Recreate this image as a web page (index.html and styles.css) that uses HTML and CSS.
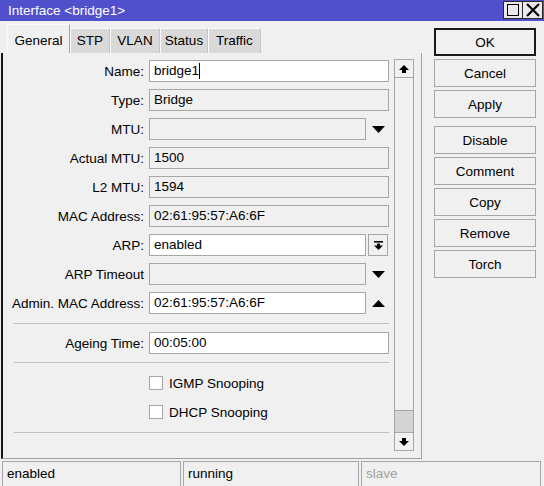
FILE: index.html
```html
<!DOCTYPE html>
<html>
<head>
<meta charset="utf-8">
<title>Interface &lt;bridge1&gt;</title>
<link rel="stylesheet" href="styles.css">
</head>
<body>
<div class="window">
  <div class="titlebar">
    <span class="title">Interface &lt;bridge1&gt;</span>
    <div class="tb-btns">
      <span class="tb-btn"><span class="max-sq"></span></span>
      <span class="tb-btn">
        <svg width="14" height="14" viewBox="0 0 14 14"><path d="M1 1 L13 13 M13 1 L1 13" stroke="#000" stroke-width="2.2" fill="none"/></svg>
      </span>
    </div>
  </div>
  <div class="main">
    <div class="left">
      <div class="tabs">
        <div class="tab active t-general">General</div>
        <div class="tab t-stp">STP</div>
        <div class="tab t-vlan">VLAN</div>
        <div class="tab t-status">Status</div>
        <div class="tab t-traffic">Traffic</div>
      </div>
      <div class="panel">
        <div class="form">
          <div class="row"><label class="lbl">Name:</label><div class="fld"><div class="inp edit full">bridge1<span class="caret"></span></div></div></div>
          <div class="row"><label class="lbl">Type:</label><div class="fld"><div class="inp full">Bridge</div></div></div>
          <div class="row"><label class="lbl">MTU:</label><div class="fld"><div class="inp short"></div><span class="tri"><svg width="13" height="7" viewBox="0 0 13 7"><polygon points="0,0 13,0 6.5,7" fill="#000"/></svg></span></div></div>
          <div class="row"><label class="lbl">Actual MTU:</label><div class="fld"><div class="inp full">1500</div></div></div>
          <div class="row"><label class="lbl">L2 MTU:</label><div class="fld"><div class="inp full">1594</div></div></div>
          <div class="row"><label class="lbl">MAC Address:</label><div class="fld"><div class="inp full">02:61:95:57:A6:6F</div></div></div>
          <div class="row"><label class="lbl">ARP:</label><div class="fld"><div class="inp edit short">enabled</div><span class="dd-btn"><svg width="9" height="9" viewBox="0 0 9 9"><rect x="0" y="0" width="9" height="1.6" fill="#000"/><rect x="3" y="2.6" width="3" height="2.2" fill="#000"/><polygon points="0,4.6 9,4.6 4.5,9" fill="#000"/></svg></span></div></div>
          <div class="row"><label class="lbl">ARP Timeout</label><div class="fld"><div class="inp short"></div><span class="tri"><svg width="13" height="7" viewBox="0 0 13 7"><polygon points="0,0 13,0 6.5,7" fill="#000"/></svg></span></div></div>
          <div class="row"><label class="lbl">Admin. MAC Address:</label><div class="fld"><div class="inp edit short">02:61:95:57:A6:6F</div><span class="tri"><svg width="13" height="7" viewBox="0 0 13 7"><polygon points="0,7 13,7 6.5,0" fill="#000"/></svg></span></div></div>
          <div class="sep sep1"></div>
          <div class="row"><label class="lbl">Ageing Time:</label><div class="fld"><div class="inp edit full">00:05:00</div></div></div>
          <div class="sep sep2"></div>
          <div class="row chk-row"><span class="lbl"></span><div class="fld"><span class="chk"></span><span class="chk-lbl">IGMP Snooping</span></div></div>
          <div class="row chk-row"><span class="lbl"></span><div class="fld"><span class="chk"></span><span class="chk-lbl">DHCP Snooping</span></div></div>
          <div class="sep sep3"></div>
        </div>
        <div class="scrollbar">
          <div class="sb-btn"><svg width="10" height="8" viewBox="0 0 10 8"><polygon points="0,5 10,5 5,0" fill="#000"/><rect x="3" y="5" width="4" height="3" fill="#000"/></svg></div>
          <div class="sb-track"></div>
          <div class="sb-thumb"></div>
          <div class="sb-btn"><svg width="10" height="8" viewBox="0 0 10 8"><rect x="3" y="0" width="4" height="3" fill="#000"/><polygon points="0,3 10,3 5,8" fill="#000"/></svg></div>
        </div>
      </div>
    </div>
    <div class="buttons">
      <div class="btn default">OK</div>
      <div class="btn">Cancel</div>
      <div class="btn">Apply</div>
      <div class="btn gap">Disable</div>
      <div class="btn">Comment</div>
      <div class="btn">Copy</div>
      <div class="btn">Remove</div>
      <div class="btn">Torch</div>
    </div>
  </div>
  <div class="statusbar">
    <div class="cell c1">enabled</div>
    <div class="cell c2">running</div>
    <div class="cell c3 dim">slave</div>
  </div>
</div>
</body>
</html>
```
FILE: styles.css
```css
html, body {
  margin: 0;
  padding: 0;
  background: #f0f0f0;
}
body {
  width: 544px;
  height: 486px;
  overflow: hidden;
  font-family: "Liberation Sans", Arial, sans-serif;
  font-size: 13.5px;
  color: #000;
}
.window {
  width: 544px;
  height: 486px;
  display: flex;
  flex-direction: column;
}
.titlebar {
  height: 21px;
  flex: none;
  background: #5050cd;
  color: #fff;
  display: flex;
  align-items: center;
  padding-left: 8px;
  box-sizing: border-box;
}
.title {
  font-size: 13.5px;
  line-height: 15px;
}
.tb-btns {
  margin-left: auto;
  align-self: flex-start;
  margin-top: 1px;
  margin-right: 1px;
  display: flex;
}
.tb-btn {
  width: 20px;
  height: 18px;
  box-sizing: border-box;
  border: 1px solid #2a2a2a;
  background: #ece9ee;
  display: flex;
  align-items: center;
  justify-content: center;
}
.tb-btn + .tb-btn {
  border-left: 0;
}
.max-sq {
  width: 12px;
  height: 12px;
  box-sizing: border-box;
  border: 1px solid #000;
}
.main {
  display: flex;
  height: 440px;
  flex: none;
}
.left {
  width: 422px;
  display: flex;
  flex-direction: column;
}
.tabs {
  height: 32px;
  display: flex;
  align-items: flex-end;
  padding-left: 7px;
  flex: none;
}
.tab {
  height: 25px;
  box-sizing: border-box;
  padding-top: 4px;
  text-align: center;
  line-height: 15px;
  background: #d9d9d9;
  border-left: 1px solid #fbfbfb;
  border-top: 1px solid #fbfbfb;
  border-right: 1px solid #c4c4c4;
}
.tab.active {
  height: 29px;
  padding-top: 8px;
  background: #f0f0f0;
  border-right: 1px solid #a0a0a0;
}
.t-general { width: 63px; }
.t-stp { width: 40px; }
.t-vlan { width: 50px; }
.t-status { width: 48px; }
.t-traffic { width: 53px; }
.panel {
  margin-left: 1px;
  height: 406px;
  box-sizing: border-box;
  border-left: 2px solid #141414;
  border-right: 1px solid #a0a0a0;
  border-bottom: 1px solid #a0a0a0;
  display: flex;
}
.form {
  width: 391px;
  padding-top: 7px;
  display: flex;
  flex-direction: column;
}
.row {
  display: flex;
  height: 22px;
  margin-bottom: 7px;
  align-items: center;
}
.lbl {
  width: 146px;
  padding-right: 5px;
  box-sizing: border-box;
  text-align: right;
  white-space: nowrap;
  flex: none;
}
.fld {
  display: flex;
  align-items: center;
  height: 22px;
}
.inp {
  height: 22px;
  box-sizing: border-box;
  border: 1px solid #a6a6a6;
  background: #f0f0f0;
  padding-left: 4px;
  line-height: 20px;
  white-space: nowrap;
  display: flex;
  align-items: center;
}
.inp.edit {
  background: #fff;
}
.inp.full { width: 240px; }
.inp.short { width: 217px; }
.caret {
  display: inline-block;
  width: 1px;
  height: 16px;
  background: #000;
  margin-left: 0px;
}
.tri {
  width: 23px;
  display: flex;
  justify-content: center;
  padding-left: 1px;
  box-sizing: border-box;
}
.tri svg { display: block; }
.dd-btn {
  margin-left: 2px;
  width: 20px;
  height: 22px;
  box-sizing: border-box;
  border: 1px solid #a6a6a6;
  background: #f0f0f0;
  display: flex;
  align-items: center;
  justify-content: center;
}
.dd-btn svg { display: block; }
.sep {
  height: 1px;
  background: #c0c0c0;
  margin-left: 11px;
  width: 375px;
}
.sep1 { margin-top: 2px; margin-bottom: 8px; }
.sep2 { margin-top: 1px; margin-bottom: 9px; }
.sep3 { margin-top: 2px; }
.chk-row .fld { height: 22px; }
.chk {
  width: 14px;
  height: 14px;
  box-sizing: border-box;
  border: 1px solid #a6a6a6;
  background: #fff;
  flex: none;
}
.chk-lbl {
  margin-left: 6px;
}
.scrollbar {
  margin-top: 6px;
  width: 20px;
  height: 392px;
  display: flex;
  flex-direction: column;
  flex: none;
}
.sb-btn {
  height: 19px;
  box-sizing: border-box;
  border: 1px solid #a6a6a6;
  background: #f0f0f0;
  display: flex;
  align-items: center;
  justify-content: center;
  flex: none;
}
.sb-btn svg { display: block; }
.sb-track {
  flex: 1;
  border-left: 1px solid #a6a6a6;
  border-right: 1px solid #a6a6a6;
}
.sb-thumb {
  height: 22px;
  flex: none;
  box-sizing: border-box;
  border: 1px solid #a6a6a6;
  border-bottom: 0;
  background: #d4d4d4;
}
.buttons {
  margin-left: 12px;
  margin-top: 7px;
  width: 102px;
  display: flex;
  flex-direction: column;
  gap: 3px;
}
.btn {
  height: 28px;
  box-sizing: border-box;
  border: 1px solid #a6a6a6;
  display: flex;
  align-items: center;
  justify-content: center;
  background: #f0f0f0;
}
.btn.default {
  border: 2px solid #1a1a1a;
}
.btn.gap {
  margin-top: 5px;
}
.statusbar {
  display: flex;
  padding-left: 2px;
  gap: 2px;
  height: 25px;
  flex: none;
}
.cell {
  height: 26px;
  box-sizing: border-box;
  border: 1px solid #a6a6a6;
  padding-left: 4px;
  line-height: 23px;
  white-space: nowrap;
}
.c1 { width: 179px; }
.c2 { width: 176px; }
.c3 { width: 180px; }
.dim { color: #a0a0a0; }
```
